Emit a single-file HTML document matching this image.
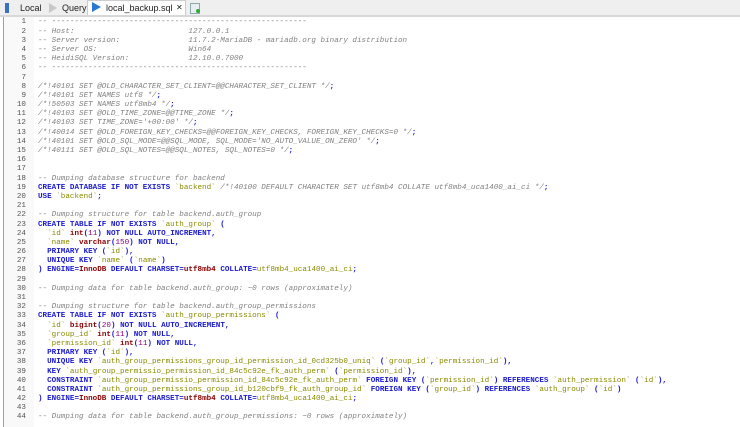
<!DOCTYPE html>
<html><head><meta charset="utf-8"><style>
body{margin:0;width:740px;height:427px;overflow:hidden;background:#fff;font-family:"Liberation Sans",sans-serif;position:relative}
.tabs{position:absolute;left:0;top:0;width:740px;height:15px;background:#efefef;border-bottom:1px solid #c8c8c8}
.tab{position:absolute;top:1px;height:14px;font-size:9px;line-height:14px;color:#222}
.sep{position:absolute;top:15px;left:0;width:740px;height:2px;background:#d8d8d8}
.frame{position:absolute;left:3px;top:17px;width:737px;height:410px;border-left:1px solid #a0a0a0;background:#fff}
.gut{position:absolute;left:4px;top:17px;width:30px;height:410px;background:#f9f9f9}
pre{margin:0;position:absolute;top:18.4px;font-family:"Liberation Mono",monospace;font-size:7.6px;line-height:9.19px}
.ln{left:4px;width:22px;text-align:right;color:#555}
.code{left:38px;color:#000}
.c{color:#808080;font-style:italic}
.k{color:#1a1ad0;font-weight:bold}
.s{color:#8a8a00}
.t{color:#8b0000;font-weight:bold}
.n{color:#800080}
</style></head><body>
<div class="tabs">
 <div style="position:absolute;left:5px;top:3px;width:4px;height:10px;background:#3a6fc4"></div>
 <div class="tab" style="left:20px">Local</div>
 <div style="position:absolute;left:49px;top:3px;width:0;height:0;border-left:8px solid #c8c8c8;border-top:5px solid transparent;border-bottom:5px solid transparent"></div>
 <div class="tab" style="left:62px">Query</div>
 <div style="position:absolute;left:87px;top:0;width:97px;height:16px;background:#fff;border:1px solid #ccc;border-bottom:none"></div>
 <div style="position:absolute;left:92px;top:2px;width:0;height:0;border-left:9px solid #2a78d0;border-top:5px solid transparent;border-bottom:5px solid transparent"></div>
 <div class="tab" style="left:106px">local_backup.sql</div>
 <div class="tab" style="left:176px;font-size:8px">✕</div>
 <div style="position:absolute;left:190px;top:3px;width:8px;height:9px;border:1px solid #8aa;background:#e8eef4"></div>
 <div style="position:absolute;left:196px;top:9px;width:4px;height:4px;border-radius:50%;background:#3a3"></div>
</div>
<div class="sep"></div>
<div class="frame"></div>
<div class="gut"></div>
<pre class="ln">1
2
3
4
5
6
7
8
9
10
11
12
13
14
15
16
17
18
19
20
21
22
23
24
25
26
27
28
29
30
31
32
33
34
35
36
37
38
39
40
41
42
43
44</pre>
<pre class="code"><span class="c">-- --------------------------------------------------------
-- Host:                         127.0.0.1
-- Server version:               11.7.2-MariaDB - mariadb.org binary distribution
-- Server OS:                    Win64
-- HeidiSQL Version:             12.10.0.7000
-- --------------------------------------------------------</span>

<span class="c">/*!40101 SET @OLD_CHARACTER_SET_CLIENT=@@CHARACTER_SET_CLIENT */</span><span class="k">;</span>
<span class="c">/*!40101 SET NAMES utf8 */</span><span class="k">;</span>
<span class="c">/*!50503 SET NAMES utf8mb4 */</span><span class="k">;</span>
<span class="c">/*!40103 SET @OLD_TIME_ZONE=@@TIME_ZONE */</span><span class="k">;</span>
<span class="c">/*!40103 SET TIME_ZONE='+00:00' */</span><span class="k">;</span>
<span class="c">/*!40014 SET @OLD_FOREIGN_KEY_CHECKS=@@FOREIGN_KEY_CHECKS, FOREIGN_KEY_CHECKS=0 */</span><span class="k">;</span>
<span class="c">/*!40101 SET @OLD_SQL_MODE=@@SQL_MODE, SQL_MODE='NO_AUTO_VALUE_ON_ZERO' */</span><span class="k">;</span>
<span class="c">/*!40111 SET @OLD_SQL_NOTES=@@SQL_NOTES, SQL_NOTES=0 */</span><span class="k">;</span>


<span class="c">-- Dumping database structure for backend</span>
<span class="k">CREATE DATABASE IF NOT EXISTS</span> <span class="s">`backend`</span> <span class="c">/*!40100 DEFAULT CHARACTER SET utf8mb4 COLLATE utf8mb4_uca1400_ai_ci */</span><span class="k">;</span>
<span class="k">USE</span> <span class="s">`backend`</span><span class="k">;</span>

<span class="c">-- Dumping structure for table backend.auth_group</span>
<span class="k">CREATE TABLE IF NOT EXISTS</span> <span class="s">`auth_group`</span> <span class="k">(</span>
  <span class="s">`id`</span> <span class="t">int</span><span class="k">(</span><span class="n">11</span><span class="k">) NOT NULL AUTO_INCREMENT,</span>
  <span class="s">`name`</span> <span class="t">varchar</span><span class="k">(</span><span class="n">150</span><span class="k">) NOT NULL,</span>
  <span class="k">PRIMARY KEY (</span><span class="s">`id`</span><span class="k">),</span>
  <span class="k">UNIQUE KEY</span> <span class="s">`name`</span> <span class="k">(</span><span class="s">`name`</span><span class="k">)</span>
<span class="k">) ENGINE=</span><span class="t">InnoDB</span> <span class="k">DEFAULT CHARSET=</span><span class="t">utf8mb4</span> <span class="k">COLLATE=</span><span class="s">utf8mb4_uca1400_ai_ci</span><span class="k">;</span>

<span class="c">-- Dumping data for table backend.auth_group: ~0 rows (approximately)</span>

<span class="c">-- Dumping structure for table backend.auth_group_permissions</span>
<span class="k">CREATE TABLE IF NOT EXISTS</span> <span class="s">`auth_group_permissions`</span> <span class="k">(</span>
  <span class="s">`id`</span> <span class="t">bigint</span><span class="k">(</span><span class="n">20</span><span class="k">) NOT NULL AUTO_INCREMENT,</span>
  <span class="s">`group_id`</span> <span class="t">int</span><span class="k">(</span><span class="n">11</span><span class="k">) NOT NULL,</span>
  <span class="s">`permission_id`</span> <span class="t">int</span><span class="k">(</span><span class="n">11</span><span class="k">) NOT NULL,</span>
  <span class="k">PRIMARY KEY (</span><span class="s">`id`</span><span class="k">),</span>
  <span class="k">UNIQUE KEY</span> <span class="s">`auth_group_permissions_group_id_permission_id_0cd325b0_uniq`</span> <span class="k">(</span><span class="s">`group_id`</span><span class="k">,</span><span class="s">`permission_id`</span><span class="k">),</span>
  <span class="k">KEY</span> <span class="s">`auth_group_permissio_permission_id_84c5c92e_fk_auth_perm`</span> <span class="k">(</span><span class="s">`permission_id`</span><span class="k">),</span>
  <span class="k">CONSTRAINT</span> <span class="s">`auth_group_permissio_permission_id_84c5c92e_fk_auth_perm`</span> <span class="k">FOREIGN KEY (</span><span class="s">`permission_id`</span><span class="k">) REFERENCES</span> <span class="s">`auth_permission`</span> <span class="k">(</span><span class="s">`id`</span><span class="k">),</span>
  <span class="k">CONSTRAINT</span> <span class="s">`auth_group_permissions_group_id_b120cbf9_fk_auth_group_id`</span> <span class="k">FOREIGN KEY (</span><span class="s">`group_id`</span><span class="k">) REFERENCES</span> <span class="s">`auth_group`</span> <span class="k">(</span><span class="s">`id`</span><span class="k">)</span>
<span class="k">) ENGINE=</span><span class="t">InnoDB</span> <span class="k">DEFAULT CHARSET=</span><span class="t">utf8mb4</span> <span class="k">COLLATE=</span><span class="s">utf8mb4_uca1400_ai_ci</span><span class="k">;</span>

<span class="c">-- Dumping data for table backend.auth_group_permissions: ~0 rows (approximately)</span></pre>
</body></html>
